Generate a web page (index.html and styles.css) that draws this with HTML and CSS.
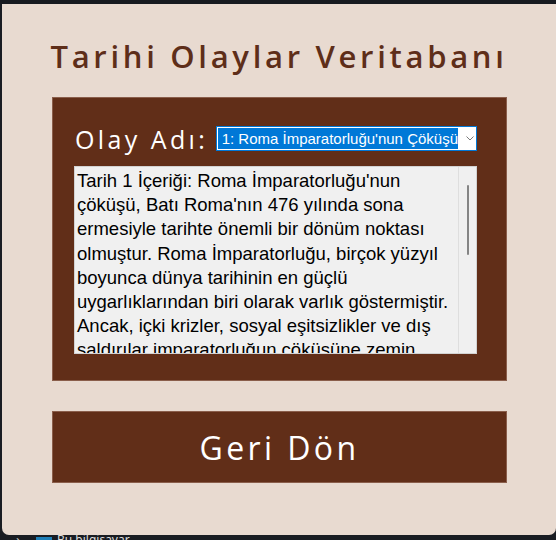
FILE: index.html
```html
<!DOCTYPE html>
<html lang="tr">
<head>
<meta charset="utf-8">
<title>Tarihi Olaylar Veritabanı</title>
<link rel="stylesheet" href="styles.css">
</head>
<body>
<div class="topbar"></div>
<main class="window">
  <h1 class="title">Tarihi Olaylar Veritabanı</h1>
  <section class="panel">
    <div class="row">
      <label class="label">Olay Adı:</label>
      <div class="select">
        <div class="sel-clip"><span class="sel-text">Tarih 1: Roma İmparatorluğu'nun Çöküşü</span></div>
        <svg class="chev" width="8" height="5" viewBox="0 0 8 5"><path d="M0.5 0.5 L4 4 L7.5 0.5" fill="none" stroke="#7a7a7a" stroke-width="1"/></svg>
      </div>
    </div>
    <div class="memo">
      <div class="memo-text">Tarih 1 İçeriği: Roma İmparatorluğu'nun çöküşü, Batı Roma'nın 476 yılında sona ermesiyle tarihte önemli bir dönüm noktası olmuştur. Roma İmparatorluğu, birçok yüzyıl boyunca dünya tarihinin en güçlü uygarlıklarından biri olarak varlık göstermiştir. Ancak, içki krizler, sosyal eşitsizlikler ve dış saldırılar imparatorluğun çöküşüne zemin hazırlamıştır.</div>
      <div class="memo-bar"><div class="thumb"></div></div>
    </div>
  </section>
  <button class="back">Geri Dön</button>
</main>
<div class="taskbar">
  <span class="tb-chev">›</span>
  <span class="tb-icon"></span>
  <span class="tb-text">Bu bilgisayar</span>
</div>
</body>
</html>
```
FILE: styles.css
```css
html, body {
  margin: 0;
  padding: 0;
}
body {
  width: 556px;
  height: 540px;
  overflow: hidden;
  background: #191c22;
  font-family: "Liberation Sans", Arial, sans-serif;
}
.topbar {
  height: 4px;
  background: #171a20;
}
.window {
  margin-left: 2px;
  height: 531px;
  box-sizing: border-box;
  background: #e8dad0;
  border-radius: 0 0 7px 7px;
  padding-top: 32px;
  display: flex;
  flex-direction: column;
}
.title {
  margin: 0 0 21px 0;
  height: 40px;
  line-height: 40px;
  font-family: "Open Sans", Lato, sans-serif;
  font-weight: 600;
  font-size: 31px;
  letter-spacing: 3.7px;
  color: #5e2e19;
  text-align: center;
  white-space: nowrap;
}
.panel {
  margin-left: 50px;
  width: 455px;
  height: 284px;
  box-sizing: border-box;
  background: #612e18;
  border: 1px solid #8a5e4b;
  padding: 28px 29px 0 21px;
  display: flex;
  flex-direction: column;
}
.row {
  display: flex;
  align-items: center;
  justify-content: space-between;
  height: 25px;
}
.label {
  font-family: "Open Sans", Lato, sans-serif;
  font-weight: 400;
  font-size: 25px;
  letter-spacing: 3.4px;
  color: #ffffff;
  white-space: nowrap;
  padding-left: 1px;
}
.select {
  width: 261px;
  height: 25px;
  box-sizing: border-box;
  border: 1px solid #0078d7;
  background: #ffffff;
  padding: 1px 0 1px 1px;
  display: flex;
  align-items: center;
}
.sel-clip {
  width: 240px;
  height: 21px;
  overflow: hidden;
  background: #0078d7;
  display: flex;
  justify-content: flex-end;
  align-items: center;
}
.sel-text {
  white-space: nowrap;
  font-size: 15px;
  color: #ffffff;
  line-height: 21px;
}
.chev {
  margin-left: 8px;
}
.memo {
  margin-top: 15px;
  height: 188px;
  box-sizing: border-box;
  border: 1px solid #d2d2d2;
  background: #f0f0f0;
  display: flex;
}
.memo-text {
  flex: 1;
  overflow: hidden;
  padding: 2px 4px 0 2px;
  font-size: 18.5px;
  line-height: 24.2px;
  color: #000000;
}
.memo-bar {
  width: 17px;
  border-left: 1px solid #dedede;
  padding-top: 18px;
  display: flex;
  justify-content: center;
}
.thumb {
  width: 2px;
  height: 70px;
  background: #858585;
  border-radius: 1px;
}
.back {
  margin: 30px 0 0 50px;
  width: 455px;
  height: 72px;
  box-sizing: border-box;
  background: #612e18;
  border: 1px solid #8a5e4b;
  color: #ffffff;
  font-family: "Open Sans", Lato, sans-serif;
  font-weight: 400;
  font-size: 32px;
  letter-spacing: 3.4px;
  padding: 0;
  cursor: pointer;
}
.taskbar {
  height: 5px;
  overflow: hidden;
  display: flex;
  align-items: flex-start;
  padding-left: 16px;
  background: #191c22;
}
.tb-chev {
  color: #c8c8c8;
  font-size: 14px;
  line-height: 10px;
  width: 20px;
}
.tb-icon {
  margin-top: 2px;
  width: 16px;
  height: 10px;
  background: #1e7fb8;
}
.tb-text {
  margin-left: 5px;
  font-family: "Noto Sans", sans-serif;
  font-size: 12px;
  line-height: 10px;
  color: #dddddd;
}
```
